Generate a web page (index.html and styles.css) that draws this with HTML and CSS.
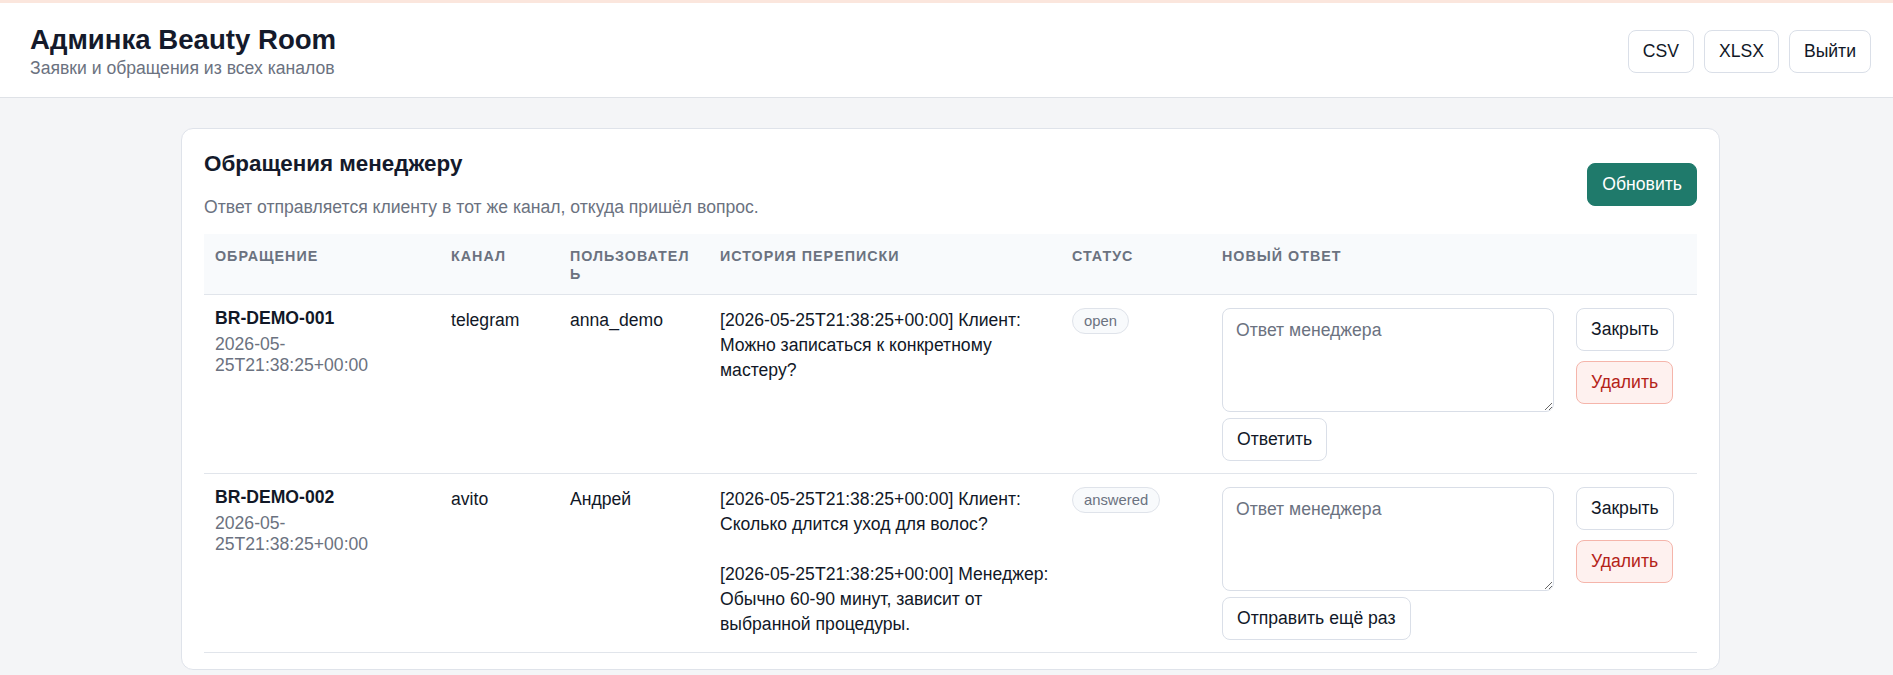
FILE: index.html
```html
<!DOCTYPE html>
<html lang="ru">
<head>
  <meta charset="UTF-8" />
  <meta name="viewport" content="width=device-width, initial-scale=1.0"/>
  <title>Админка Beauty Room</title>
  <link rel="stylesheet" href="styles.css">
</head>
<body>
  <header class="topbar">
    <div>
      <h1>Админка Beauty Room</h1>
      <div class="subtitle">Заявки и обращения из всех каналов</div>
    </div>
    <div class="topbar-actions">
      <button class="btn">CSV</button>
      <button class="btn">XLSX</button>
      <button class="btn">Выйти</button>
    </div>
  </header>

  <main class="card">
    <div class="card-head">
      <div>
        <h2>Обращения менеджеру</h2>
        <p class="hint">Ответ отправляется клиенту в тот же канал, откуда пришёл вопрос.</p>
      </div>
      <button class="btn btn-primary">Обновить</button>
    </div>

    <table class="tickets">
      <colgroup>
        <col class="col-id">
        <col class="col-channel">
        <col class="col-user">
        <col class="col-history">
        <col class="col-status">
        <col class="col-reply">
        <col class="col-actions">
      </colgroup>
      <thead>
        <tr>
          <th>Обращение</th>
          <th>Канал</th>
          <th>Пользователь</th>
          <th>История переписки</th>
          <th>Статус</th>
          <th>Новый ответ</th>
          <th></th>
        </tr>
      </thead>
      <tbody>
        <tr>
          <td>
            <div class="ticket-id">BR-DEMO-001</div>
            <div class="ticket-date">2026-05-25T21:38:25+00:00</div>
          </td>
          <td>telegram</td>
          <td>anna_demo</td>
          <td class="history">[2026-05-25T21:38:25+00:00] Клиент: Можно записаться к конкретному мастеру?</td>
          <td><span class="pill">open</span></td>
          <td>
            <textarea class="reply" placeholder="Ответ менеджера"></textarea>
            <button class="btn btn-send">Ответить</button>
          </td>
          <td>
            <div class="actions">
              <button class="btn">Закрыть</button>
              <button class="btn btn-danger">Удалить</button>
            </div>
          </td>
        </tr>
        <tr>
          <td>
            <div class="ticket-id">BR-DEMO-002</div>
            <div class="ticket-date">2026-05-25T21:38:25+00:00</div>
          </td>
          <td>avito</td>
          <td>Андрей</td>
          <td class="history">[2026-05-25T21:38:25+00:00] Клиент: Сколько длится уход для волос?

[2026-05-25T21:38:25+00:00] Менеджер: Обычно 60-90 минут, зависит от выбранной процедуры.</td>
          <td><span class="pill">answered</span></td>
          <td>
            <textarea class="reply" placeholder="Ответ менеджера"></textarea>
            <button class="btn btn-send">Отправить ещё раз</button>
          </td>
          <td>
            <div class="actions">
              <button class="btn">Закрыть</button>
              <button class="btn btn-danger">Удалить</button>
            </div>
          </td>
        </tr>
      </tbody>
    </table>
  </main>
</body>
</html>
```

FILE: styles.css
```css
body {
  margin: 0;
  font-family: "Liberation Sans", Arial, sans-serif;
  font-size: 17.6px;
  color: #111827;
  background-color: #f4f5f7;
}

.topbar {
  display: flex;
  justify-content: space-between;
  align-items: center;
  padding: 20px 22px 17px 30px;
  background-color: #fff;
  border-top: 3px solid #fbe6dd;
  border-bottom: 1px solid #dfe2e7;
}

h1 {
  margin: 0;
  font-size: 27.6px;
  line-height: 1.22;
  color: #141a2b;
}

.subtitle {
  font-size: 17.6px;
  line-height: 23px;
  color: #6b7280;
}

.topbar-actions {
  display: flex;
  gap: 10px;
}

.btn {
  height: 43px;
  padding: 0 14px;
  background-color: #fff;
  color: #111827;
  font-family: inherit;
  font-size: 17.6px;
  border: 1px solid #dadfe8;
  border-radius: 8px;
  cursor: pointer;
}

.btn-primary {
  background-color: #1f7a6b;
  border-color: #1f7a6b;
  color: #fff;
}

.btn-danger {
  background-color: #fef1ef;
  border-color: #f5b5ab;
  color: #b42318;
}

.card {
  margin: 30px 173px 0 181px;
  padding: 22px 22px 16px;
  background-color: #fff;
  border: 1px solid #dfe3ea;
  border-radius: 12px;
}

.card-head {
  display: flex;
  justify-content: space-between;
  align-items: center;
  margin-bottom: 15px;
}

h2 {
  margin: 0 0 18px;
  font-size: 22.4px;
  line-height: 1.2;
  color: #141a2b;
}

.hint {
  margin: 0;
  font-size: 17.6px;
  line-height: 23px;
  color: #6b7280;
}

.tickets {
  width: 100%;
  border-collapse: collapse;
  table-layout: fixed;
}

.col-id { width: 236px; }
.col-channel { width: 119px; }
.col-user { width: 150px; }
.col-history { width: 352px; }
.col-status { width: 150px; }
.col-reply { width: 354px; }
.col-actions { width: 132px; }

.tickets th {
  padding: 13px 11px 11px;
  background-color: #f8fafc;
  color: #6b7280;
  font-size: 14.3px;
  line-height: 18px;
  letter-spacing: 0.07em;
  text-transform: uppercase;
  text-align: left;
  vertical-align: top;
  overflow-wrap: break-word;
  border-bottom: 1px solid #e1e5eb;
}

.tickets td {
  padding: 13px 11px 12px;
  line-height: 25px;
  vertical-align: top;
  border-bottom: 1px solid #e1e5eb;
}

.ticket-id {
  font-weight: bold;
  line-height: 1.15;
}

.ticket-date {
  margin-top: 6px;
  line-height: 21px;
  color: #6b7280;
}

.history {
  white-space: pre-line;
}

.pill {
  display: inline-block;
  vertical-align: top;
  padding: 0 11px;
  line-height: 24px;
  font-size: 14.8px;
  color: #6b7280;
  background-color: #f8fafc;
  border: 1px solid #dfe3ea;
  border-radius: 999px;
}

.reply {
  display: block;
  width: 100%;
  height: 104px;
  box-sizing: border-box;
  padding: 11px 13px;
  font-family: inherit;
  font-size: 17.6px;
  color: #111827;
  border: 1px solid #d9dee7;
  border-radius: 8px;
  resize: vertical;
}

.reply::placeholder {
  color: #6b7280;
}

.btn-send {
  margin-top: 6px;
}

.actions {
  display: flex;
  flex-direction: column;
  align-items: flex-start;
  gap: 10px;
}
```
